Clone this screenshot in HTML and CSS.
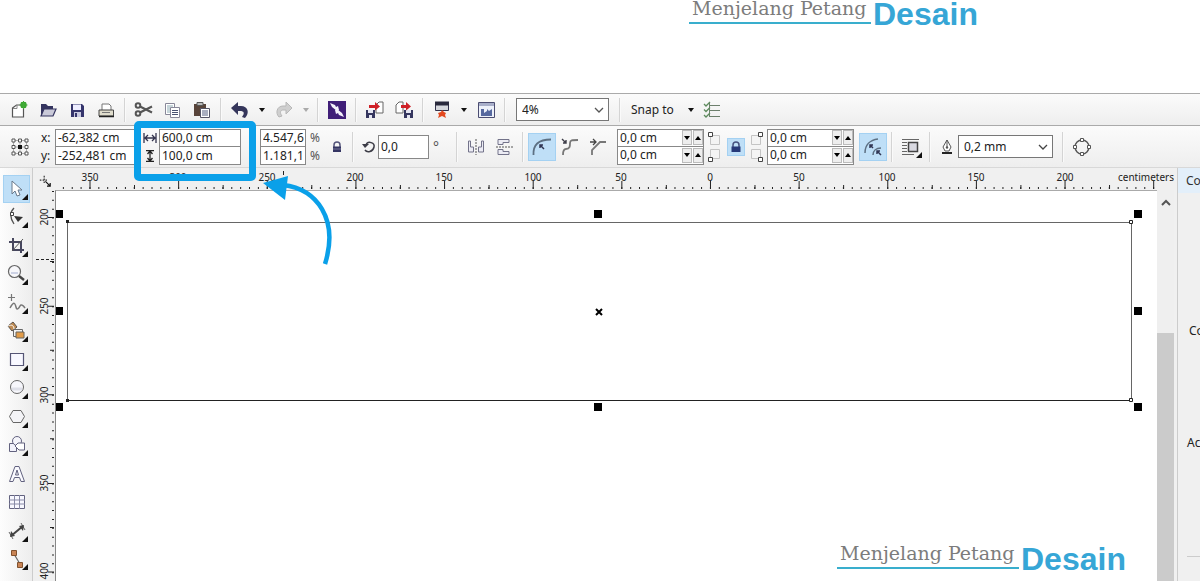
FILE: index.html
```html
<!DOCTYPE html>
<html lang="en">
<head>
<meta charset="utf-8">
<title>Menjelang Petang Desain</title>
<link rel="stylesheet" href="styles.css">
</head>
<body>
<header class="banner">
  <div class="brand"><span class="brand-name">Menjelang Petang</span><span class="brand-word">Desain</span></div>
</header>

<div class="toolbar standard" role="toolbar" aria-label="Standard">
  <button class="tool" aria-label="New"><svg viewBox="0 0 20 20"><path d="M3.500 8l4-3h7v12h-11z" fill="#fff" stroke="#555" stroke-width="1.2"/><path d="M4 8.500h4V5" fill="none" stroke="#888"/><circle cx="14.500" cy="5" r="3.200" fill="#36a52c"/><path d="M14.500 1v8M10.500 5h8M12 2l5 6M17 2l-5 6" stroke="#43ab38" stroke-width="1"/></svg></button>
  <button class="tool" aria-label="Open"><svg viewBox="0 0 20 20"><path d="M3 16V4h5l2 2h5v3H7z" fill="#34345f"/><path d="M6 9h12l-3 7H3z" fill="#c9c9d8" stroke="#34345f" stroke-width="1.200"/></svg></button>
  <button class="tool" aria-label="Save"><svg viewBox="0 0 20 20"><path d="M4 4h11l2 2v11H4z" fill="#35356c"/><path d="M6 4.500h8V10H6z" fill="#eef"/><path d="M7 12h7v5H7z" fill="#c9cae0"/><path d="M8 13h2v4H8z" fill="#35356c"/></svg></button>
  <button class="tool" aria-label="Print"><svg viewBox="0 0 20 20"><path d="M6 10V4h7l2 2v4" fill="#fff" stroke="#777"/><path d="M3 10h14.500v6H3z" fill="#e0ddcd" stroke="#444"/><path d="M3 16.500h15" stroke="#222" stroke-width="1.500"/><path d="M6 12.500h8" stroke="#777"/></svg></button>
  <span class="sep"></span>
  <button class="tool" aria-label="Cut"><svg viewBox="0 0 20 20"><g fill="none" stroke="#555" stroke-width="2"><circle cx="4" cy="5.500" r="2.300"/><circle cx="4" cy="13.500" r="2.300"/><path d="M6 6.500l12 6M6 12.500l12-6"/></g></svg></button>
  <button class="tool" aria-label="Copy"><svg viewBox="0 0 20 20"><g fill="#fff" stroke="#889"><path d="M2.500 3.500h9v11h-9z"/><path d="M7.500 7.500h9v10h-9z"/></g><path d="M4 6h6M4 8h3M4 10h3M4 12h3" stroke="#8dabb4"/><path d="M9 10.500h6M9 12.500h6M9 14.500h6" stroke="#4a5271"/></svg></button>
  <button class="tool" aria-label="Paste"><svg viewBox="0 0 20 20"><path d="M2 4h12v12H2z" fill="#58443a"/><path d="M5 2.500h6v3H5z" fill="#bbb" stroke="#555"/><path d="M8.500 8.500h9v9h-9z" fill="#fff" stroke="#556"/><path d="M10 11h6M10 13h6M10 15h6" stroke="#555e80"/></svg></button>
  <span class="sep"></span>
  <button class="tool" aria-label="Undo"><svg viewBox="0 0 20 20"><path d="M1 8l7-6v4h3c7 0 9 7 4 12l-3-1c3-4 2-6-2-6H8v4z" fill="#35365b"/></svg></button>
  <button class="drop" aria-label="Undo list"><svg viewBox="0 0 6 4"><path d="M0 0h6L3 4z" fill="#111"/></svg></button>
  <button class="tool" aria-label="Redo"><svg viewBox="0 0 20 20"><path d="M18 8l-6-6v4H9c-6 0-8 7-4 11l3-1c-3-4-1-6 1-6h3v4z" fill="#cfcfcf" stroke="#b8b8b8"/></svg></button>
  <button class="drop" aria-label="Redo list"><svg viewBox="0 0 6 4"><path d="M0 0h6L3 4z" fill="#aaa"/></svg></button>
  <span class="sep"></span>
  <button class="tool" aria-label="Search content"><svg viewBox="0 0 20 20"><path d="M1 1h18v18H1z" fill="#401e78"/><path d="M3 3l5 2 1 2 2-1 1 4-2 1-5-4z" fill="#f5f1fb"/><path d="M17 17l-5-2-1-2-2 1-1-4 2-1 5 4z" fill="#f5f1fb"/></svg></button>
  <span class="sep"></span>
  <button class="tool" aria-label="Import"><svg viewBox="0 0 20 20"><path d="M11 5l3-3h4v11h-7z" fill="#fff" stroke="#666"/><path d="M1 10h9v8H1z" fill="#35365f"/><path d="M3 10h5v3H3zM4 15h3v3H4z" fill="#e5e6f2"/><path d="M4 5h6V2l5 4.500-5 4V8H4z" fill="#cf2027"/></svg></button>
  <button class="tool" aria-label="Export"><svg viewBox="0 0 20 20"><path d="M2 5l3-3h4v11H2z" fill="#fff" stroke="#666"/><path d="M10 10h9v8h-9z" fill="#35365f"/><path d="M12 10h5v3h-5zM13 15h3v3h-3z" fill="#e5e6f2"/><path d="M7 5h5V2l5 4.500-5 4V8H7z" fill="#cf2027"/></svg></button>
  <span class="sep"></span>
  <button class="tool" aria-label="Launch"><svg viewBox="0 0 20 20"><path d="M3.500 2.500h13v8h-13z" fill="#d6d8dd" stroke="#33334d"/><path d="M3 1.500h14v4H3z" fill="#29293c"/><path d="M10 10l2 2 2 1-1 2 1 3-4-2-4 2 1-3-1-2 3-1z" fill="#e3491f"/></svg></button>
  <button class="drop" aria-label="Launch list"><svg viewBox="0 0 6 4"><path d="M0 0h6L3 4z" fill="#111"/></svg></button>
  <button class="tool" aria-label="Welcome screen"><svg viewBox="0 0 20 20"><path d="M2.500 2.500h16v15h-16z" fill="#edf1fa" stroke="#4b4c71"/><path d="M3 3h15v3H3z" fill="#a8afca"/><path d="M5 9h3v4l3-2V9l2 2 3-2v7H5z" fill="#56689f"/></svg></button>
  <span class="sep"></span>
  <span class="combo zoom"><select aria-label="Zoom level"><option>4%</option></select><svg viewBox="0 0 10 6"><path d="M1 1l4 4 4-4" fill="none" stroke="#555" stroke-width="1.300"/></svg></span>
  <span class="sep"></span>
  <button class="snap">Snap to<svg viewBox="0 0 6 4"><path d="M0 0h6L3 4z" fill="#111"/></svg></button>
  <button class="tool" aria-label="Options"><svg viewBox="0 0 20 20"><path d="M6 5.500h11M6 10.500h11M6 16.500h11M6.500 2v15" stroke="#6d806d" fill="none"/><path d="M1 4l2 2 4-4M1 9.500l2 2 4-4M1 15l2 2 4-4" stroke="#5d8b5d" fill="none" stroke-width="1.300"/></svg></button>
</div>

<div class="toolbar property" role="toolbar" aria-label="Property bar">
  <button class="origin" aria-label="Object origin"><svg viewBox="0 0 20 20"><path d="M3 3.500h14M3 10h14M3 16.500h14M3.500 3v14M10 3v14M16.500 3v14" stroke="#aaa"/><g fill="#fff" stroke="#555"><path d="M2 2h3v3H2zM8.500 2h3v3h-3zM15 2h3v3h-3zM2 8.500h3v3H2zM15 8.500h3v3h-3zM2 15h3v3H2zM8.500 15h3v3h-3zM15 15h3v3h-3z"/></g><path d="M8 8h4v4H8z" fill="#111"/></svg></button>
  <div class="pair position"><label for="px">x:</label><input id="px" value="-62,382 cm"><label for="py">y:</label><input id="py" value="-252,481 cm"></div>
  <div class="pair size">
    <label for="w" aria-label="Width"><svg viewBox="0 0 14 12"><path d="M1 1v10M13 1v10M2 6h10M5 3L2 6l3 3M9 3l3 3-3 3" stroke="#33334d" fill="none" stroke-width="1.300"/></svg></label><input id="w" value="600,0 cm">
    <label for="h" aria-label="Height"><svg viewBox="0 0 14 12"><path d="M3 .500h8M3 11.500h8M7 1v10M4.500 4L7 1l2.500 3M4.500 8L7 11l2.500-3" stroke="#222" fill="none" stroke-width="1.300"/></svg></label><input id="h" value="100,0 cm">
  </div>
  <div class="pair scale"><input id="sx" value="4.547,6"><label for="sx">%</label><input id="sy" value="1.181,1"><label for="sy">%</label></div>
  <button class="lock" aria-label="Lock ratio"><svg viewBox="0 0 16 16"><path d="M5 8V6c0-4 6-4 6 0v2" fill="none" stroke="#55557b" stroke-width="1.500"/><path d="M4 7.500h8V13H4z" fill="#343563"/><path d="M4 10h8" stroke="#777799"/></svg></button>
  <span class="sep"></span>
  <label class="turn" for="angle" aria-label="Rotation"><svg viewBox="0 0 14 14"><path d="M4 5c2-5 9-2 8 2-1 5-7 6-9 3" fill="none" stroke="#3c3c46" stroke-width="1.500"/><path d="M0 4h7L3 8z" fill="#3c3c46"/></svg></label>
  <input class="angle" id="angle" value="0,0"><span class="degree">°</span>
  <span class="sep"></span>
  <button class="wide" aria-label="Mirror horizontally"><svg viewBox="0 0 20 20"><path d="M2.500 4v11h5V10h-3V4zM17.500 4v11h-5V10h3V4z" fill="#ececf4" stroke="#73738a"/><path d="M10 2v16" stroke="#555" stroke-dasharray="2 1"/></svg></button>
  <button class="wide" aria-label="Mirror vertically"><svg viewBox="0 0 20 20"><path d="M4 2.500h11v3H9v2H4zM4 17.500h11v-3H9v-2H4z" fill="#ececf4" stroke="#73738a"/><path d="M2 10h17" stroke="#555" stroke-dasharray="2 1"/></svg></button>
  <span class="sep"></span>
  <button class="wide active" aria-label="Round corner"><svg viewBox="0 0 20 20"><path d="M1.500 18C1 8 6 2.500 19 2.500" fill="none" stroke="#5d7083" stroke-width="1.800"/><path d="M12 12L8 8M8 11V8h3" fill="none" stroke="#303553" stroke-width="1.500"/></svg></button>
  <button class="wide" aria-label="Scalloped corner"><svg viewBox="0 0 20 20"><path d="M3 18c0-3 0-6 3-6 4 0 4-3 4-6 0-3 2-3 8-3" fill="none" stroke="#777" stroke-width="1.800"/><path d="M2 2l4 4M6 3v3H3" fill="none" stroke="#3d3d48" stroke-width="1.400"/></svg></button>
  <button class="wide" aria-label="Chamfered corner"><svg viewBox="0 0 20 20"><path d="M4 18v-5l8-8h6" fill="none" stroke="#777" stroke-width="1.800"/><path d="M2 5h6M5 2l3 3-3 3" fill="none" stroke="#444" stroke-width="1.300"/></svg></button>
  <div class="spins">
    <div class="spin"><input aria-label="Top left radius" value="0,0 cm"><button aria-label="Decrease"><svg viewBox="0 0 6 4"><path d="M0 0h6L3 4z"/></svg></button><button aria-label="Increase"><svg viewBox="0 0 6 4"><path d="M0 4h6L3 0z"/></svg></button></div>
    <div class="spin"><input aria-label="Bottom left radius" value="0,0 cm"><button aria-label="Decrease"><svg viewBox="0 0 6 4"><path d="M0 0h6L3 4z"/></svg></button><button aria-label="Increase"><svg viewBox="0 0 6 4"><path d="M0 4h6L3 0z"/></svg></button></div>
  </div>
  <svg class="corners" viewBox="0 0 20 34"><path d="M6.500 5.500h9v9h-9zM6.500 19.500h9v9h-9z" fill="#f4f4f4" stroke="#c4c4c4"/><path d="M4.500 2.500h4v4h-4zM4.500 27.500h4v4h-4z" fill="#fff" stroke="#444"/></svg>
  <button class="link active" aria-label="Edit corners together"><svg viewBox="0 0 16 16"><path d="M5 8V6c0-4 6-4 6 0v2" fill="none" stroke="#45527f" stroke-width="1.500"/><path d="M3.500 7.500h9V13h-9z" fill="#263979"/></svg></button>
  <svg class="corners" viewBox="0 0 20 34"><path d="M5.500 5.500h9v9h-9zM5.500 19.500h9v9h-9z" fill="#f4f4f4" stroke="#c4c4c4"/><path d="M12.500 2.500h4v4h-4zM12.500 27.500h4v4h-4z" fill="#fff" stroke="#444"/></svg>
  <div class="spins right">
    <div class="spin"><input aria-label="Top right radius" value="0,0 cm"><button aria-label="Decrease"><svg viewBox="0 0 6 4"><path d="M0 0h6L3 4z"/></svg></button><button aria-label="Increase"><svg viewBox="0 0 6 4"><path d="M0 4h6L3 0z"/></svg></button></div>
    <div class="spin"><input aria-label="Bottom right radius" value="0,0 cm"><button aria-label="Decrease"><svg viewBox="0 0 6 4"><path d="M0 0h6L3 4z"/></svg></button><button aria-label="Increase"><svg viewBox="0 0 6 4"><path d="M0 4h6L3 0z"/></svg></button></div>
  </div>
  <button class="wide relative active" aria-label="Relative corner scaling"><svg viewBox="0 0 20 20"><path d="M2 16C2 8 7 3 15 2M10 18c0-4 3-7 8-7" fill="none" stroke="#5d7083" stroke-width="1.500"/><path d="M10 11L7 8M7 11V8h3M18 18l-4-4M14 17v-3h3" fill="none" stroke="#303553" stroke-width="1.500"/></svg></button>
  <span class="sep"></span>
  <button class="wide flyout" aria-label="Wrap text"><svg viewBox="0 0 20 20"><path d="M1 2.500h17M1 5.500h5M1 8.500h5M1 11.500h5M1 14.500h5M1 17.500h12" stroke="#666"/><path d="M7.500 5.500h9v9h-9z" fill="#d9d9e1" stroke="#444" stroke-width="1.500"/></svg></button>
  <span class="sep"></span>
  <label class="nib" for="outline" aria-label="Outline width"><svg viewBox="0 0 14 18"><path d="M7 2l4 7-2 4H5L3 9zM7 2v7" fill="#fff" stroke="#555"/><circle cx="7" cy="9.500" r="1.200" fill="#555"/><path d="M2 15h10" stroke="#222" stroke-width="2"/></svg></label>
  <span class="combo outline"><select id="outline"><option>0,2 mm</option></select><svg viewBox="0 0 10 6"><path d="M1 1l4 4 4-4" fill="none" stroke="#444" stroke-width="1.300"/></svg></span>
  <span class="sep"></span>
  <button class="wide" aria-label="Convert to curves"><svg viewBox="0 0 20 20"><circle cx="10" cy="10" r="7" fill="none" stroke="#555" stroke-width="1.400"/><path d="M8.500 1.500h3v3h-3zM8.500 15.500h3v3h-3zM1.500 8.500h3v3h-3zM15.500 8.500h3v3h-3z" fill="#fff" stroke="#555"/></svg></button>
</div>

<main class="workspace">
  <nav class="toolbox" aria-label="Toolbox">
    <div class="duo">
      <button class="flyout active" aria-label="Pick"><svg viewBox="0 0 20 20"><path d="M5 2v13l3-3 2 5 3-1-2-5h4z" fill="#fff" stroke="#68788a"/></svg></button>
      <button class="flyout" aria-label="Shape"><svg viewBox="0 0 20 20"><path d="M7 1C2 6 3 11 7 17" fill="none" stroke="#555" stroke-width="1.300"/><path d="M3.500 5.500h3v3h-3z" fill="#fff" stroke="#444"/><path d="M7 9l9 1-5 5z" fill="#333"/></svg></button>
    </div>
    <div class="duo">
      <button class="flyout" aria-label="Crop"><svg viewBox="0 0 20 20"><path d="M6 2v12h11M2 6h12v11" fill="none" stroke="#47475e" stroke-width="2"/><path d="M5 15L16 3" stroke="#555"/></svg></button>
      <button class="flyout" aria-label="Zoom"><svg viewBox="0 0 20 20"><circle cx="7.500" cy="7.500" r="6" fill="#f7f7fa" stroke="#666" stroke-width="1.200"/><path d="M4 9h7" stroke="#cdd2e5" stroke-width="2"/><path d="M12 12l5 4" stroke="#444" stroke-width="2.500"/></svg></button>
    </div>
    <div class="duo">
      <button class="flyout" aria-label="Freehand"><svg viewBox="0 0 20 20"><path d="M4.500 1v7M1 4.500h7" stroke="#777" stroke-width="1.200"/><path d="M3 15c4-7 5-5 6-1s3 1 4-1 3-1 5 2" fill="none" stroke="#777" stroke-width="1.500"/></svg></button>
      <button class="flyout" aria-label="Smart fill"><svg viewBox="0 0 20 20"><path d="M1 5l5-4 4 5-5 4z" fill="#c08b51" stroke="#595149"/><path d="M1 5c4-2 6 0 6 3" fill="none" stroke="#fff"/><path d="M6.500 8.500h9v7h-9z" fill="#f2f2f2" stroke="#666"/><path d="M9 11h8v6H9z" fill="#e19b48" stroke="#67645f"/></svg></button>
    </div>
    <div class="duo">
      <button class="flyout" aria-label="Rectangle"><svg viewBox="0 0 20 20"><path d="M3.500 3.500h13v12h-13z" fill="#f8f8ff" stroke="#555575" stroke-width="1.200"/></svg></button>
      <button class="flyout" aria-label="Ellipse"><svg viewBox="0 0 20 20"><circle cx="10" cy="9" r="6.500" fill="#f7f7fc" stroke="#666"/><path d="M5 11h10" stroke="#dfe0e9" stroke-width="3"/></svg></button>
    </div>
    <div class="duo">
      <button class="flyout" aria-label="Polygon"><svg viewBox="0 0 20 20"><path d="M6 3.500h8l3.500 6-3.500 6H6l-3.500-6z" fill="#f4f4f7" stroke="#666"/></svg></button>
      <button class="flyout" aria-label="Basic shapes"><svg viewBox="0 0 20 20"><path d="M2.500 8.500h7v8h-7z" fill="#f2f2fb" stroke="#62627f"/><circle cx="10" cy="6" r="4.500" fill="#f5f5fb" stroke="#62627f"/><path d="M8 11l3-3h6.500v7H12z" fill="#fff" stroke="#62627f"/></svg></button>
    </div>
    <div class="duo">
      <button aria-label="Text"><svg viewBox="0 0 20 20"><path d="M2.500 17.500L8 2.500h4l5.500 15h-3.500l-1.500-4h-5L6 17.500zM8.500 11h3L10 6z" fill="#fafaff" stroke="#62627f"/></svg></button>
      <button aria-label="Table"><svg viewBox="0 0 20 20"><path d="M2.500 3.500h15v13h-15z" fill="#f8f8ff" stroke="#62627f"/><path d="M2 8h16M2 12h16M7.500 3v14M12.500 3v14" stroke="#888aa6"/></svg></button>
    </div>
    <div class="duo">
      <button class="flyout" aria-label="Dimension"><svg viewBox="0 0 20 20"><path d="M4 15L16 5" stroke="#444" stroke-width="2"/><path d="M2 11l4 7M14 2l4 7" stroke="#666"/><path d="M3 16l1-6 4 5zM17 4l-1 6-4-5z" fill="#444"/></svg></button>
      <button class="flyout" aria-label="Connector"><svg viewBox="0 0 20 20"><path d="M7 5l6 10" stroke="#666" stroke-width="1.200"/><path d="M4.500 1.500h5v5h-5zM10.500 13.500h5v5h-5z" fill="#c98455" stroke="#80522f"/></svg></button>
    </div>
    <div class="duo"><button aria-label="Drop shadow"><svg viewBox="0 0 20 20"><path d="M3.500 3.500h6v6h-6z" fill="#f5f5ff" stroke="#6464a1"/><path d="M9 9h7v7H9z" fill="#99a"/></svg></button></div>
  </nav>

  <section class="document" aria-label="Drawing window">
    <div class="ruler-corner"><svg viewBox="0 0 20 20"><path d="M1 6.500h9M6.500 1v9" stroke="#333" stroke-width="1.500" stroke-dasharray="2 1.500"/><path d="M8 8l6 6M14 10v4h-4" stroke="#111" fill="none" stroke-width="1.500"/></svg></div>
    <svg class="ruler-h" aria-label="Horizontal ruler">
      <g stroke="#222">
        <path d="M0 20h1102" stroke-width="2" stroke-dasharray="1 7.864" stroke-dashoffset="1"/>
        <path d="M34.500 17h1070" stroke-width="8" stroke-dasharray="1 87.640"/>
        <path d="M79 19h1020" stroke-width="4" stroke-dasharray="1 87.640"/>
        <path d="M228.500 3v4"/>
      </g>
      <g text-anchor="middle"><text x="35" y="13">350</text><text x="123" y="13">300</text><text x="212" y="13">250</text><text x="300" y="13">200</text><text x="389" y="13">150</text><text x="478" y="13">100</text><text x="566" y="13">50</text><text x="655" y="13">0</text><text x="744" y="13">50</text><text x="832" y="13">100</text><text x="921" y="13">150</text><text x="1010" y="13">200</text><text x="1091" y="13">centimeters</text></g>
    </svg>
    <svg class="ruler-v" aria-label="Vertical ruler">
      <g stroke="#222">
        <path d="M20 1v400" stroke-width="2" stroke-dasharray="1 7.864"/>
        <path d="M18 27v400" stroke-width="6" stroke-dasharray="1 87.640"/>
        <path d="M19 71v400" stroke-width="4" stroke-dasharray="1 87.640"/>
        <path d="M3 69.500h18" stroke-dasharray="3 2"/>
      </g>
      <g text-anchor="middle"><text transform="translate(15 27) rotate(-90)">200</text><text transform="translate(15 116) rotate(-90)">250</text><text transform="translate(15 205) rotate(-90)">300</text><text transform="translate(15 293) rotate(-90)">350</text><text transform="translate(15 381) rotate(-90)">400</text></g>
    </svg>
    <div class="canvas">
      <svg class="drawing" aria-label="Selected rectangle">
        <path d="M11.500 31.500h1064v178h-1064z" fill="none" stroke="#666"/>
        <path d="M11 209.500h1065" stroke="#222"/>
        <g fill="#fff" stroke="#222"><path d="M1073.500 29.500h3v3h-3zM1073.500 207.500h3v3h-3z"/></g>
        <path d="M10 29h3v3h-3zM10 208h3v3h-3z" fill="#222"/>
        <path d="M-1 19h8v8h-8zM538 19h8v8h-8zM1078 19h8v8h-8zM-1 116h8v8h-8zM1078 116h8v8h-8zM-1 212h8v8h-8zM538 212h8v8h-8zM1078 212h8v8h-8z" fill="#000"/>
        <path d="M540 118l6 6M546 118l-6 6" stroke="#000" stroke-width="2"/>
      </svg>
      <div class="brand watermark"><span class="brand-name">Menjelang Petang</span><span class="brand-word">Desain</span></div>
    </div>
    <div class="scrollbar"><button aria-label="Scroll up"><svg viewBox="0 0 10 7"><path d="M1 6l4-4 4 4" fill="none" stroke="#555" stroke-width="2"/></svg></button><div class="thumb"></div></div>
  </section>

  <aside class="docker"><h2>Co</h2><p class="color">Co</p><p class="action">Ac</p><hr></aside>
</main>

<div class="highlight"></div>
<svg class="arrow" viewBox="0 0 80 96" aria-hidden="true"><path d="M20 12C54 16 76 46 62 91" fill="none" stroke="#0aa0e9" stroke-width="4.500"/><path d="M0 10L25 3l-3 24z" fill="#0aa0e9"/></svg>
</body>
</html>
```
FILE: styles.css
```css
* { box-sizing: border-box; }

body {
  position: relative;
  display: flex;
  flex-direction: column;
  height: 100vh;
  margin: 0;
  overflow: hidden;
  background: #fff;
  color: #222;
  font: 12px/16px "Noto Sans", "DejaVu Sans", sans-serif;
}

button, input, select {
  margin: 0;
  padding: 0;
  border: 0;
  border-radius: 0;
  background: none;
  color: inherit;
  font: inherit;
}

svg { display: block; }

/* Brand */
.banner { flex: none; height: 93px; padding-left: 689px; }

.brand { display: flex; align-items: flex-start; white-space: nowrap; }

.brand-name {
  width: 182px;
  height: 24px;
  padding-left: 3px;
  border-bottom: 2px solid #39aecd;
  color: #7c7c7c;
  font: 19px/16px "DejaVu Serif", serif;
}

.brand-word {
  padding-left: 2px;
  color: #36a6d6;
  font: bold 32px/28px "Liberation Sans", Arial, sans-serif;
}

.watermark { position: absolute; left: 781px; top: 354px; }

/* Toolbars */
.toolbar {
  display: flex;
  flex: none;
  align-items: center;
  background: linear-gradient(#fbfbfb, #eee);
}

.toolbar button { display: flex; flex: none; align-items: center; justify-content: center; }
.toolbar .sep {
  flex: none;
  width: 2px;
  height: 30px;
  margin: 0 4px;
  border-left: 1px solid #d4d4d4;
  border-right: 1px solid #fafafa;
}

.standard { gap: 5px; height: 32px; padding-left: 7px; border-top: 1px solid #aaa; }
.standard .sep { height: 24px; margin: 0 1px; }
.standard .tool { width: 24px; height: 28px; }
.tool svg { width: 20px; height: 20px; }
.standard .drop { width: 10px; height: 28px; }
.drop svg, .snap svg { width: 6px; height: 4px; }
.standard .snap { gap: 14px; padding: 0 2px 0 4px; height: 28px; }

.combo { position: relative; flex: none; border: 1px solid #777; background: #fff; }
.combo select { width: 100%; height: 100%; padding-left: 5px; appearance: none; }
.combo svg { position: absolute; top: 8px; right: 4px; width: 10px; height: 6px; pointer-events: none; }
.zoom { width: 93px; height: 23px; margin: 0 4px; }
.outline { width: 95px; height: 23px; margin-right: 5px; }

.property { height: 43px; padding-left: 9px; border-top: 1px solid #aaa; border-bottom: 1px solid #d8d8d8; }
.property .wide { width: 28px; height: 28px; }
.wide svg, .origin svg { width: 20px; height: 20px; }
.property .origin { width: 22px; height: 28px; }
.property .active, .toolbox .active { background: #bfdff7; box-shadow: inset 0 0 0 1px #a4d1f2; }

.pair { display: grid; flex: none; grid-auto-rows: 18px; align-items: center; }
.pair input, .spin, .angle { width: 100%; height: 18px; padding-left: 2px; border: 1px solid #888; background: #fff; }
.pair input:nth-of-type(2) { border-top-width: 0; }
.position { grid-template-columns: 14px 80px; margin-left: 10px; }
.size { grid-template-columns: 16px 82px; margin-left: 8px; }
.size svg { width: 14px; height: 12px; }
.scale { grid-template-columns: 46px 20px; margin-left: 19px; }
.scale label { padding-left: 4px; color: #555; }

.property .lock { width: 22px; height: 28px; }
.lock svg, .link svg { width: 16px; height: 16px; }
.turn { width: 20px; padding-left: 4px; }
.turn svg { width: 14px; height: 14px; }
.angle { flex: none; width: 51px; height: 24px; }
.degree { width: 23px; padding-left: 4px; color: #555; font-size: 14px; }

.spins { flex: none; width: 87px; margin-left: 5px; }
.spins.right { margin-left: 1px; }
.spin { display: flex; align-items: center; gap: 1px; }
.spin:last-child { border-top-width: 0; }
.spin input { flex: 1; min-width: 0; }
.spin button { width: 10px; height: 15px; border: 1px solid #bbb; background: #eee; }
.spin button svg { flex: none; width: 6px; height: 4px; }
.corners { flex: none; width: 20px; height: 34px; }
.property .link { width: 18px; height: 18px; margin: 0 1px 0 3px; }
.property .relative { margin-left: 5px; }
.nib { width: 23px; padding-left: 5px; }
.nib svg { width: 14px; height: 18px; }

.flyout { position: relative; }
.flyout::after {
  content: "";
  position: absolute;
  right: 3px;
  bottom: 3px;
  border-left: 6px solid transparent;
  border-bottom: 6px solid #111;
}

/* Workspace */
.workspace { display: flex; flex: 1; min-height: 0; background: #f0f0f0; }

.toolbox {
  display: flex;
  flex: none;
  flex-direction: column;
  gap: 1px;
  width: 33px;
  padding: 7px 2px 0 3px;
  overflow: hidden;
  border-right: 1px solid #ccc;
  background: linear-gradient(90deg, #fdfdfd, #ededed);
}

.duo { flex: none; }
.toolbox button { display: grid; width: 27px; height: 28px; place-items: center; }
.toolbox svg { width: 20px; height: 20px; }
.toolbox .flyout::after { right: 2px; }

.document {
  display: grid;
  flex: 1;
  grid-template: 22px 1fr / 22px 1fr 17px;
  min-width: 0;
  min-height: 0;
  overflow: hidden;
}

.ruler-corner { padding: 7px 0 0 6px; }
.ruler-corner svg { width: 16px; height: 16px; }
.ruler-h { grid-column: 2 / 4; width: 100%; height: 22px; }
.ruler-v { width: 22px; height: 100%; min-height: 0; }
.document text { fill: #222; font-size: 10px; }

.canvas {
  position: relative;
  min-width: 0;
  overflow: hidden;
  border-top: 1px solid #aaa;
  border-left: 1px solid #888;
  background: #fff;
}

.drawing { width: 100%; height: 100%; overflow: visible; }

.scrollbar { display: flex; flex-direction: column; background: #efefef; }
.scrollbar button { display: grid; height: 24px; place-items: center; }
.scrollbar svg { width: 10px; height: 7px; }
.thumb { flex: 1; margin-top: 119px; background: #cbcbcb; }

.docker {
  flex: none;
  width: 23px;
  margin-left: 3px;
  overflow: hidden;
  border-left: 1px solid #ccc;
  white-space: nowrap;
}

.docker h2 { margin: 0; padding: 5px 0 4px 8px; background: #e3effa; color: #333; font: inherit; }
.docker p { margin: 0; }
.docker .color { padding-top: 130px; padding-left: 11px; }
.docker .action { padding-top: 96px; padding-left: 9px; }
.docker hr { margin: 105px 0 0 9px; border: 0; border-top: 1px solid #ccc; }

/* Callout */
.highlight {
  position: absolute;
  left: 134px;
  top: 121px;
  width: 122px;
  height: 60px;
  border: 7px solid #0aa0e9;
  border-radius: 5px;
  pointer-events: none;
}

.arrow { position: absolute; left: 263px; top: 173px; width: 80px; height: 96px; pointer-events: none; }
```
